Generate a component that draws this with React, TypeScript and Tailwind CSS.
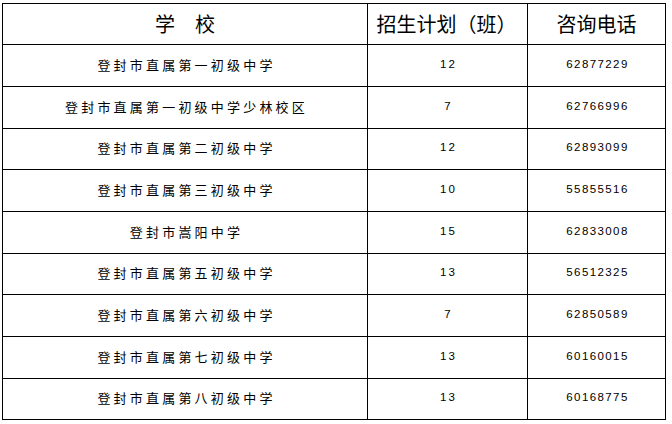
const rows = [
  { name: "登封市直属第一初级中学", plan: "12", phone: "62877229", h: "h-[42px]" },
  { name: "登封市直属第一初级中学少林校区", plan: "7", phone: "62766996", h: "h-[42px]" },
  { name: "登封市直属第二初级中学", plan: "12", phone: "62893099", h: "h-[41px]" },
  { name: "登封市直属第三初级中学", plan: "10", phone: "55855516", h: "h-[42px]" },
  { name: "登封市嵩阳中学", plan: "15", phone: "62833008", h: "h-[42px]" },
  { name: "登封市直属第五初级中学", plan: "13", phone: "56512325", h: "h-[41px]" },
  { name: "登封市直属第六初级中学", plan: "7", phone: "62850589", h: "h-[42px]" },
  { name: "登封市直属第七初级中学", plan: "13", phone: "60160015", h: "h-[42px]" },
  { name: "登封市直属第八初级中学", plan: "13", phone: "60168775", h: "h-[41px]" },
];

const cjk = "font-['Noto_Sans_CJK_SC',sans-serif]";
const num = "font-['Liberation_Sans','Noto_Sans_CJK_SC',sans-serif]";

export default function App() {
  return (
    <div className="min-h-[424px] w-[672px] bg-white pl-[2px] pt-[3px] text-black">
      <div className="w-[664px] border-l border-t border-black">
        <div className={`flex h-[41px] border-b border-black text-[20px] leading-none ${cjk}`}>
          <div className="flex w-[365px] items-center justify-center border-r border-black">
            学　校
          </div>
          <div className="flex w-[160px] items-center justify-center border-r border-black pr-[2px]">
            招生计划（班）
          </div>
          <div className="flex w-[138px] items-center justify-center border-r border-black">
            咨询电话
          </div>
        </div>
        {rows.map((row) => (
          <div key={row.name} className={`flex ${row.h} border-b border-black`}>
            <div
              className={`flex w-[365px] items-center justify-center border-r border-black pb-[3px] pl-[3px] text-[13px] leading-none tracking-[3.2px] ${cjk}`}
            >
              {row.name}
            </div>
            <div
              className={`flex w-[160px] items-center justify-center border-r border-black pb-[2px] pl-[2px] text-[11.5px] font-light leading-none tracking-[2px] ${num}`}
            >
              {row.plan}
            </div>
            <div
              className={`flex w-[138px] items-center justify-center border-r border-black pb-[2px] pl-[2px] text-[11.5px] font-light leading-none tracking-[1.4px] ${num}`}
            >
              {row.phone}
            </div>
          </div>
        ))}
      </div>
    </div>
  );
}
